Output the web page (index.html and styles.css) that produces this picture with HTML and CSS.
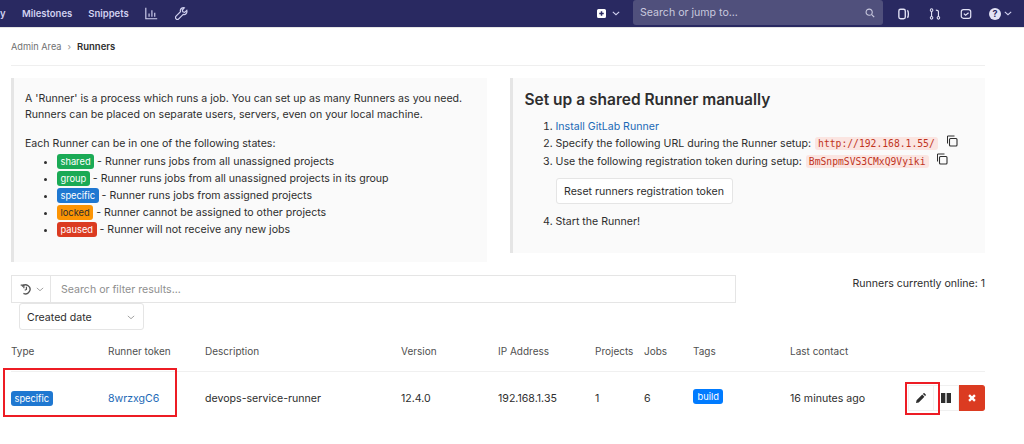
FILE: index.html
```html
<!DOCTYPE html>
<html lang="en">
<head>
    <meta charset="UTF-8">
    <title>Runners - Admin Area</title>
    <link rel="stylesheet" href="styles.css">
</head>
<body>

<header class="navbar">
    <nav class="nav-left">
        <span class="nav-cut">y</span>
        <a class="nav-link">Milestones</a>
        <a class="nav-link">Snippets</a>
        <svg class="nav-icon" viewBox="0 0 16 16"><path d="M1 1v13.5h14" fill="none" stroke="currentColor" stroke-width="1.4"/><path d="M5 8v4M8.5 4v8M12 7v5" fill="none" stroke="currentColor" stroke-width="1.4"/></svg>
        <svg class="nav-icon" viewBox="0 0 16 16"><path d="M14.5 4.2l-2.6 2.4-2.3-.6-.6-2.3L11.4 1C9.3.4 7 1.6 6.6 3.8c-.1.7-.1 1.4.2 2L1.3 11.3c-.9.9-.9 2.4 0 3.3s2.4.9 3.3 0l5.5-5.500c2.500.8 5.300-1.200 4.400-4.900z" fill="none" stroke="currentColor" stroke-width="1.500"/></svg>
    </nav>
    <div class="nav-right">
        <span class="nav-plus">
            <svg class="plus-icon" viewBox="0 0 12 12"><path d="M2 0h8a2 2 0 0 1 2 2v8a2 2 0 0 1-2 2H2a2 2 0 0 1-2-2V2a2 2 0 0 1 2-2zm3 3v2H3v2h2v2h2V7h2V5H7V3z" fill="currentColor" fill-rule="evenodd"/></svg>
            <svg class="chev" viewBox="0 0 10 6"><path d="M1 1l4 3.500L9 1" fill="none" stroke="currentColor" stroke-width="1.300"/></svg>
        </span>
        <div class="nav-search">
            <span>Search or jump to...</span>
            <svg class="search-icon" viewBox="0 0 12 12"><circle cx="5" cy="5" r="3.700" fill="none" stroke="currentColor" stroke-width="1.300"/><path d="M8 8l3 3" stroke="currentColor" stroke-width="1.500"/></svg>
        </div>
        <svg class="nav-tool" viewBox="0 0 14 14"><rect x="1" y="1.500" width="7.500" height="11" rx="2" fill="none" stroke="currentColor" stroke-width="1.600"/><path d="M11 2.500c1.500 1.500 1.500 7.500 0 9" fill="none" stroke="currentColor" stroke-width="1.600"/></svg>
        <svg class="nav-tool" viewBox="0 0 14 14"><circle cx="3" cy="2.500" r="1.500" fill="none" stroke="currentColor" stroke-width="1.200"/><circle cx="3" cy="11.500" r="1.500" fill="none" stroke="currentColor" stroke-width="1.200"/><circle cx="11" cy="11.500" r="1.500" fill="none" stroke="currentColor" stroke-width="1.200"/><path d="M3 4v6M11 10V4.500C11 3 10 2.500 8 2.500" fill="none" stroke="currentColor" stroke-width="1.300"/></svg>
        <svg class="nav-tool" viewBox="0 0 14 14"><rect x="1.500" y="2" width="11" height="10" rx="2.500" fill="none" stroke="currentColor" stroke-width="1.400"/><path d="M4.500 6.500l2 2 3.500-3" fill="none" stroke="currentColor" stroke-width="1.400"/></svg>
        <span class="nav-help">
            <span class="help-dot">?</span>
            <svg class="chev" viewBox="0 0 10 6"><path d="M1 1l4 3.500L9 1" fill="none" stroke="currentColor" stroke-width="1.300"/></svg>
        </span>
    </div>
</header>

<main class="content">
    <div class="breadcrumbs">
        <span class="crumb">Admin Area</span>
        <span class="crumb-sep">&rsaquo;</span>
        <strong>Runners</strong>
    </div>

    <div class="panels">
        <section class="panel panel-left">
            <p>A 'Runner' is a process which runs a job. You can set up as many Runners as you need.<br>Runners can be placed on separate users, servers, even on your local machine.</p>
            <p class="states-title">Each Runner can be in one of the following states:</p>
            <ul class="states">
                <li><span class="badge green">shared</span> - Runner runs jobs from all unassigned projects</li>
                <li><span class="badge green">group</span> - Runner runs jobs from all unassigned projects in its group</li>
                <li><span class="badge blue">specific</span> - Runner runs jobs from assigned projects</li>
                <li><span class="badge orange">locked</span> - Runner cannot be assigned to other projects</li>
                <li><span class="badge red">paused</span> - Runner will not receive any new jobs</li>
            </ul>
        </section>

        <section class="panel panel-right">
            <h3>Set up a shared Runner manually</h3>
            <ol class="steps">
                <li><a class="link">Install GitLab Runner</a></li>
                <li>Specify the following URL during the Runner setup: <code>http://192.168.1.55/</code>
                    <svg class="copy" viewBox="0 0 12 12"><path d="M8.500 1H1.500v7.500" fill="none" stroke="currentColor" stroke-width="1"/><rect x="3.500" y="3.500" width="7.500" height="7.500" rx="1" fill="none" stroke="currentColor" stroke-width="1.100"/></svg></li>
                <li class="step-token">Use the following registration token during setup: <code>BmSnpmSVS3CMxQ9Vyiki</code>
                    <svg class="copy" viewBox="0 0 12 12"><path d="M8.500 1H1.500v7.500" fill="none" stroke="currentColor" stroke-width="1"/><rect x="3.500" y="3.500" width="7.500" height="7.500" rx="1" fill="none" stroke="currentColor" stroke-width="1.100"/></svg>
                    <button class="reset-btn">Reset runners registration token</button></li>
                <li>Start the Runner!</li>
            </ol>
        </section>
    </div>

    <div class="filter-row">
        <div class="filter-box">
            <span class="history">
                <svg class="history-icon" viewBox="0 0 14 14"><path d="M2.500 4A5.200 5.200 0 1 1 4 12" fill="none" stroke="currentColor" stroke-width="1.600"/><path d="M.8 2.500h3.700V6" fill="none" stroke="currentColor" stroke-width="1.400"/><path d="M7.500 4.500v3l-2 1" fill="none" stroke="currentColor" stroke-width="1.400"/></svg>
                <svg class="chev grey" viewBox="0 0 10 6"><path d="M1 1l4 3.500L9 1" fill="none" stroke="currentColor" stroke-width="1.200"/></svg>
            </span>
            <span class="filter-text">Search or filter results...</span>
        </div>
        <div class="online">Runners currently online: 1</div>
    </div>

    <div class="sort-box">
        <span>Created date</span>
        <svg class="chev grey" viewBox="0 0 10 6"><path d="M1 1l4 3.500L9 1" fill="none" stroke="currentColor" stroke-width="1.200"/></svg>
    </div>

    <div class="runners">
        <div class="runner-row runner-head">
            <span>Type</span>
            <span>Runner token</span>
            <span>Description</span>
            <span>Version</span>
            <span>IP Address</span>
            <span>Projects</span>
            <span>Jobs</span>
            <span>Tags</span>
            <span>Last contact</span>
            <span></span>
        </div>
        <div class="runner-row runner-item">
            <span><span class="badge blue">specific</span></span>
            <a class="link">8wrzxgC6</a>
            <span>devops-service-runner</span>
            <span>12.4.0</span>
            <span>192.168.1.35</span>
            <span>1</span>
            <span>6</span>
            <span><span class="badge tag">build</span></span>
            <span>16 minutes ago</span>
            <span class="actions">
                <button class="act-btn"><svg class="act-icon" viewBox="0 0 12 12"><path d="M0 12l.7-3.300L7.500 1.900l2.600 2.600-6.800 6.800zM8.300 1.100L9.300.1q.3-.2.6 0l2 2q.2.3 0 .6l-1 1z" fill="currentColor"/></svg></button>
                <button class="act-btn"><svg class="act-icon" viewBox="0 0 12 12"><path d="M0 0h5.200v12H0zM6.800 0H12v12H6.800z" fill="currentColor"/></svg></button>
                <button class="act-btn act-del"><svg class="act-icon" viewBox="0 0 12 12"><path d="M2.500 2.500l7 7M9.500 2.500l-7 7" fill="none" stroke="currentColor" stroke-width="2.800"/></svg></button>
            </span>
        </div>
    </div>
</main>

<!-- annotations drawn over the screenshot -->
<div class="mark mark-row"></div>
<div class="mark mark-edit"></div>

</body>
</html>
```

FILE: styles.css
```css
html, body {
    height: 444px;
    overflow: hidden;
}
body {
    margin: 0;
    font-family: Inter, "Noto Sans", sans-serif;
    font-size: 10.6px;
    line-height: 17px;
    color: #2e2e2e;
    background: white;
    position: relative;
}
.navbar {
    height: 27px;
    background: #292961;
    border-bottom: 1px solid #e5e5e5;
    display: flex;
    justify-content: space-between;
    align-items: center;
    color: #d1d1f0;
}
.nav-left {
    display: flex;
    align-items: center;
    margin-top: -1px;
    font-weight: 600;
    font-size: 9.5px;
}
.nav-cut {
    width: 22px;
}
.nav-link {
    margin-right: 16px;
}
.nav-icon {
    width: 13px;
    height: 13px;
    margin-right: 17px;
}
.nav-right {
    display: flex;
    align-items: center;
}
.nav-plus {
    display: flex;
    align-items: center;
    gap: 6px;
    width: 36px;
}
.plus-icon {
    width: 9px;
    height: 9px;
    color: white;
}
.chev {
    width: 8px;
    height: 5px;
}
.nav-search {
    width: 250px;
    height: 25px;
    margin: -2px 15px 0 0;
    padding: 0 8px 0 7px;
    box-sizing: border-box;
    background: #50507c;
    border-radius: 3px;
    display: flex;
    align-items: center;
    justify-content: space-between;
    color: #c9c9de;
}
.search-icon {
    width: 10px;
    height: 10px;
}
.nav-tool {
    width: 12px;
    height: 12px;
    margin-right: 19px;
    color: #e2e2f5;
}
.nav-help {
    display: flex;
    align-items: center;
    gap: 3px;
    margin: 0 12px 0 -2px;
}
.help-dot {
    width: 12px;
    height: 12px;
    border-radius: 50%;
    background: #e2e2f5;
    color: #292961;
    font-size: 9px;
    font-weight: 700;
    line-height: 12px;
    text-align: center;
}
.content {
    padding: 0 39px 0 11px;
}
.breadcrumbs {
    height: 37px;
    display: flex;
    align-items: center;
    gap: 6px;
    font-size: 9.2px;
    border-bottom: 1px solid #efefef;
}
.breadcrumbs strong {
    font-size: 9.5px;
    font-weight: 600;
    color: #2e2e2e;
}
.crumb {
    color: #707070;
}
.crumb-sep {
    color: #909090;
}
.panels {
    display: flex;
    align-items: flex-start;
    gap: 23px;
    margin-top: 12px;
}
.panel {
    width: 476px;
    box-sizing: border-box;
    background: #fafafa;
    border-left: 3px solid #e5e5e5;
    padding: 13px 11px 0;
}
.panel-left {
    height: 184px;
}
.panel-right {
    height: 175px;
    padding: 12px 12px 0;
}
.panel p {
    margin: 0;
    line-height: 16px;
}
.panel .states-title {
    margin-top: 13px;
}
.states {
    margin: 1px 0 0;
    padding-left: 32px;
}
.states li {
    height: 17px;
}
.badge {
    display: inline-block;
    padding: 0 3.5px;
    border-radius: 3px;
    font-size: 9.3px;
    line-height: 15px;
    color: white;
}
.green { background: #1aaa55; }
.blue { background: #1f78d1; }
.orange { background: #fc9403; color: #2e2e2e; }
.red { background: #db3b21; }
.tag {
    background: #007bff;
    padding: 0 4.5px;
    margin-bottom: 4px;
}
h3 {
    margin: 0 0 8px;
    font-size: 15.5px;
    line-height: 20px;
    font-weight: 600;
}
.steps {
    margin: 0;
    padding-left: 31px;
}
.step-token {
    margin-top: 1px;
}
.link {
    color: #1b69b6;
}
code {
    font-family: "DejaVu Sans Mono", monospace;
    font-size: 9.7px;
    line-height: 13px;
    color: #c0341d;
    background: #fbe5e1;
    border-radius: 3px;
    padding: 1px 3px;
    margin-left: 1px;
}
.copy {
    width: 12px;
    height: 12px;
    margin-left: 5px;
    vertical-align: 0;
}
.reset-btn {
    display: block;
    margin: 8px 0 9px;
    height: 26px;
    width: 177px;
    padding: 0;
    background: white;
    border: 1px solid #e5e5e5;
    border-radius: 3px;
    font: inherit;
    color: #2e2e2e;
}
.filter-row {
    display: flex;
    justify-content: space-between;
    margin-top: 13px;
}
.filter-box {
    width: 725px;
    height: 28px;
    box-sizing: border-box;
    border: 1px solid #e5e5e5;
    display: flex;
    align-items: center;
}
.history {
    width: 39px;
    height: 100%;
    box-sizing: border-box;
    padding-left: 8px;
    border-right: 1px solid #e5e5e5;
    display: flex;
    align-items: center;
    gap: 4px;
    color: #555;
}
.history-icon {
    width: 12px;
    height: 12px;
}
.grey {
    color: #a0a0a0;
}
.filter-text {
    margin-left: 10px;
    color: #8f8f8f;
}
.online {
    line-height: 14px;
    margin-top: 2px;
}
.sort-box {
    width: 125px;
    height: 27px;
    margin-left: 8px;
    padding: 1px 8px 0 7px;
    box-sizing: border-box;
    border: 1px solid #e5e5e5;
    border-radius: 3px;
    display: flex;
    align-items: center;
    justify-content: space-between;
}
.runners {
    margin-top: 8px;
    width: 974px;
}
.runner-row {
    display: grid;
    grid-template-columns: 97px 97px 196px 97px 97px 49px 49px 97px 97px 1fr;
    align-items: center;
}
.runner-head {
    height: 26px;
    padding-bottom: 7px;
    border-bottom: 1px solid #f0f0f0;
    font-size: 10px;
    color: #4f4f4f;
}
.runner-item {
    height: 52px;
}
.actions {
    display: flex;
    justify-content: flex-end;
}
.act-btn {
    width: 26px;
    height: 26px;
    padding: 0;
    border: 1px solid #f0f0f0;
    background: white;
    display: flex;
    align-items: center;
    justify-content: center;
    color: #2e2e2e;
}
.act-btn + .act-btn {
    border-left: 0;
    width: 25px;
}
.act-btn.act-del {
    width: 26px;
    background: #db3b21;
    border-color: #db3b21;
    border-radius: 0 3px 3px 0;
    color: white;
}
.act-icon {
    width: 10px;
    height: 10px;
}
.mark {
    position: absolute;
    box-sizing: border-box;
    border: 2px solid #ed1c24;
}
.mark-row {
    left: 3px;
    top: 368px;
    width: 174px;
    height: 49px;
}
.mark-edit {
    left: 905px;
    top: 382px;
    width: 35px;
    height: 33px;
}
```
